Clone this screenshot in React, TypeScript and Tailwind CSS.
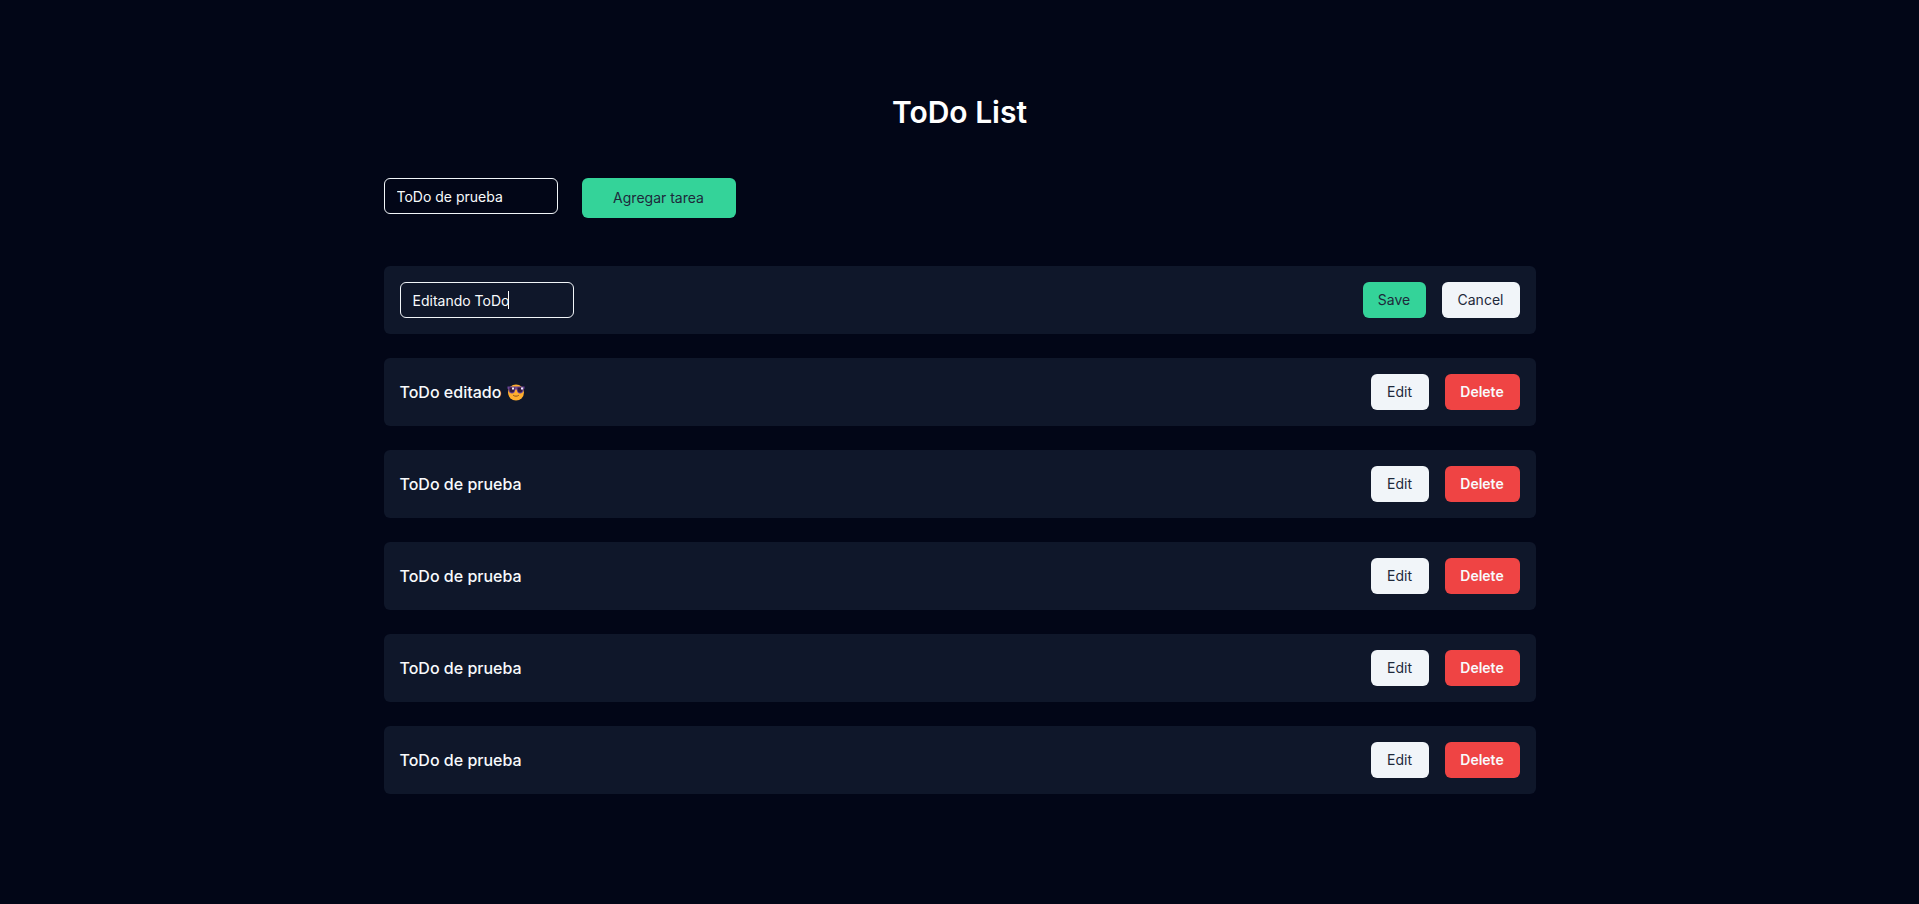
import { useState } from "react";

const base = "h-9 rounded-md text-sm";
const green = "bg-[#34d399] font-normal text-[#1e293b]";
const light = "bg-[#f1f5f9] font-normal text-[#1e293b]";

const field =
  "block h-9 w-[174px] rounded-md border border-slate-100 bg-transparent px-3 text-sm text-slate-50 caret-transparent outline-none";

function CoolFace() {
  return (
    <svg viewBox="0 0 18 18" className="size-[18px]" role="img" aria-label="cool face">
      <circle cx="9" cy="9.500" r="8" fill="#ffae2e" />
      <path d="M0.500 3.500h17v2l-1 1c0 2.500-1.500 4-3.500 4s-3-1.500-3.300-4h-1.400c-.3 2.500-1.300 4-3.300 4s-3.500-1.500-3.500-4l-1-1z" fill="#6b4596" />
      <path d="M2.500 4.500h5v1.700c0 2-1 3.300-2.500 3.300s-2.500-1.200-2.500-3zM10.500 4.500h5v2c0 1.800-1 3-2.500 3s-2.500-1.300-2.500-3.300z" fill="#321b41" />
      <path d="M5 4.500h2v2h-2zM14 4.500h2v2h-2z" fill="#f4edff" />
      <path d="M6.500 12.500c1.500 1 3.500 1 5 0" fill="none" stroke="#8a5220" strokeWidth="1" strokeLinecap="round" />
    </svg>
  );
}

const todos = [
  { id: 1, text: "ToDo editado", cool: true },
  { id: 2, text: "ToDo de prueba", cool: false },
  { id: 3, text: "ToDo de prueba", cool: false },
  { id: 4, text: "ToDo de prueba", cool: false },
  { id: 5, text: "ToDo de prueba", cool: false },
];

export default function App() {
  const [task, setTask] = useState("ToDo de prueba");
  const [draft, setDraft] = useState("Editando ToDo");

  return (
    <main className="min-h-screen bg-[#020617] px-6 pt-[94px] pb-12 font-['Inter','Liberation_Sans',sans-serif] text-slate-50">
      <div className="mx-auto max-w-6xl">
        <h1 className="mb-12 text-center text-3xl leading-9 font-semibold text-white">ToDo List</h1>
        <form className="mb-12 flex items-start gap-6" onSubmit={(e) => e.preventDefault()}>
          <input aria-label="Nueva tarea" className={field} value={task} onChange={(e) => setTask(e.target.value)} />
          <button type="submit" className="h-10 w-[154px] rounded-md bg-[#34d399] text-sm text-[#1e293b]">
            Agregar tarea
          </button>
        </form>
        <ul className="flex flex-col gap-6">
          <li className="flex items-center justify-between rounded-md bg-[#0f172a] p-4">
            <div className="relative">
              <input aria-label="Editar tarea" className={field} value={draft} onChange={(e) => setDraft(e.target.value)} />
              <span className="absolute top-[9px] left-[108px] h-[18px] w-px bg-white" />
            </div>
            <div className="flex gap-4">
              <button type="button" className={`${base} ${green} w-[63px]`}>Save</button>
              <button type="button" className={`${base} ${light} w-[78px]`}>Cancel</button>
            </div>
          </li>
          {todos.map((todo) => (
            <li key={todo.id} className="flex items-center justify-between rounded-md bg-[#0f172a] p-4">
              <p className="flex items-center gap-1.5 text-base font-medium text-slate-50">
                {todo.text}
                {todo.cool && <CoolFace />}
              </p>
              <div className="flex gap-4">
                <button type="button" className={`${base} ${light} w-[58px]`}>Edit</button>
                <button type="button" className={`${base} w-[75px] bg-[#ef4444] font-semibold text-slate-50`}>Delete</button>
              </div>
            </li>
          ))}
        </ul>
      </div>
    </main>
  );
}
